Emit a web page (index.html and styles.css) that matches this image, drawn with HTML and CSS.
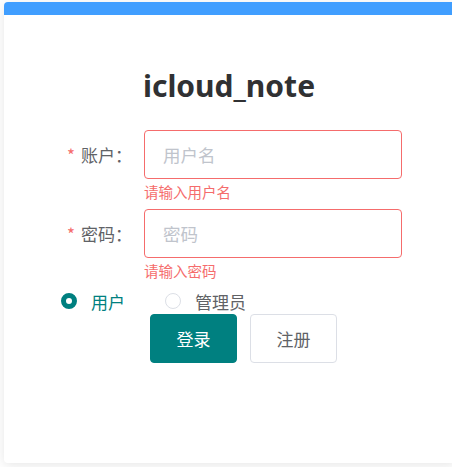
FILE: index.html
```html
<!DOCTYPE html>
<html lang="zh-CN">
<head>
<meta charset="utf-8">
<title>icloud_note</title>
<link rel="stylesheet" href="styles.css">
</head>
<body>
<div class="card">
  <h1 class="title">icloud_note</h1>
  <form class="form">
    <div class="form-item">
      <label class="label"><span class="star">*</span>账户：</label>
      <div class="field">
        <input class="input" type="text" placeholder="用户名">
        <div class="error">请输入用户名</div>
      </div>
    </div>
    <div class="form-item">
      <label class="label"><span class="star">*</span>密码：</label>
      <div class="field">
        <input class="input" type="password" placeholder="密码">
        <div class="error">请输入密码</div>
      </div>
    </div>
    <div class="radios">
      <label class="radio checked"><span class="radio-dot"></span><span class="radio-text">用户</span></label>
      <label class="radio"><span class="radio-dot"></span><span class="radio-text">管理员</span></label>
    </div>
    <div class="actions">
      <button type="button" class="btn btn-primary">登录</button>
      <button type="button" class="btn">注册</button>
    </div>
  </form>
</div>
</body>
</html>
```

FILE: styles.css
```css
* { box-sizing: border-box; }
html, body { margin: 0; padding: 0; background: #fff; }
body {
  font-family: "Noto Sans CJK SC", "Noto Sans", sans-serif;
  overflow: hidden;
  width: 452px;
  height: 467px;
}
.card {
  margin: 2px 0 0 4px;
  width: 452px;
  height: 461px;
  background: #fff;
  border-top: 13px solid #409eff;
  border-radius: 4px;
  box-shadow: 0 2px 12px rgba(0, 0, 0, 0.1);
  overflow: hidden;
}
.title {
  margin: 51px 0 0;
  height: 40px;
  line-height: 40px;
  text-align: center;
  font-family: "Noto Sans", "Open Sans", sans-serif;
  font-weight: 700;
  font-size: 30px;
  color: #303133;
  padding-right: 2px;
}
.form {
  margin-top: 24px;
}
.form-item {
  display: flex;
  align-items: flex-start;
}
.label {
  width: 140px;
  height: 49px;
  line-height: 49px;
  padding-right: 12px;
  text-align: right;
  font-size: 17px;
  color: #606266;
}
.star {
  color: #f56c6c;
  margin-right: 6px;
}
.field {
  width: 258px;
  height: 79px;
}
.input {
  display: block;
  width: 258px;
  height: 49px;
  border: 1px solid #f56c6c;
  border-radius: 4px;
  padding: 0 18px;
  font-family: inherit;
  font-size: 17.5px;
  color: #606266;
  outline: none;
  background: #fff;
}
.input::placeholder { color: #c0c4cc; }
.error {
  margin-top: 4px;
  line-height: 18px;
  font-size: 14.5px;
  color: #f56c6c;
}
.radios {
  display: flex;
  align-items: center;
  height: 26px;
  padding-left: 57px;
}
.radio {
  display: flex;
  align-items: center;
  margin-right: 40px;
  font-size: 17px;
  color: #606266;
}
.radio-dot {
  width: 16px;
  height: 16px;
  border-radius: 50%;
  border: 1px solid #dcdfe6;
  background: #fff;
  margin-right: 14px;
}
.radio.checked { color: #008080; }
.radio.checked .radio-dot {
  border: 5px solid #008080;
  background: #fff;
}
.actions {
  display: flex;
  gap: 13px;
  padding-left: 146px;
}
.btn {
  width: 87px;
  height: 49px;
  border: 1px solid #dcdfe6;
  border-radius: 4px;
  background: #fff;
  color: #606266;
  font-family: inherit;
  font-size: 17px;
  padding: 0;
}
.btn-primary {
  background: #008080;
  border-color: #008080;
  color: #fff;
}
```
